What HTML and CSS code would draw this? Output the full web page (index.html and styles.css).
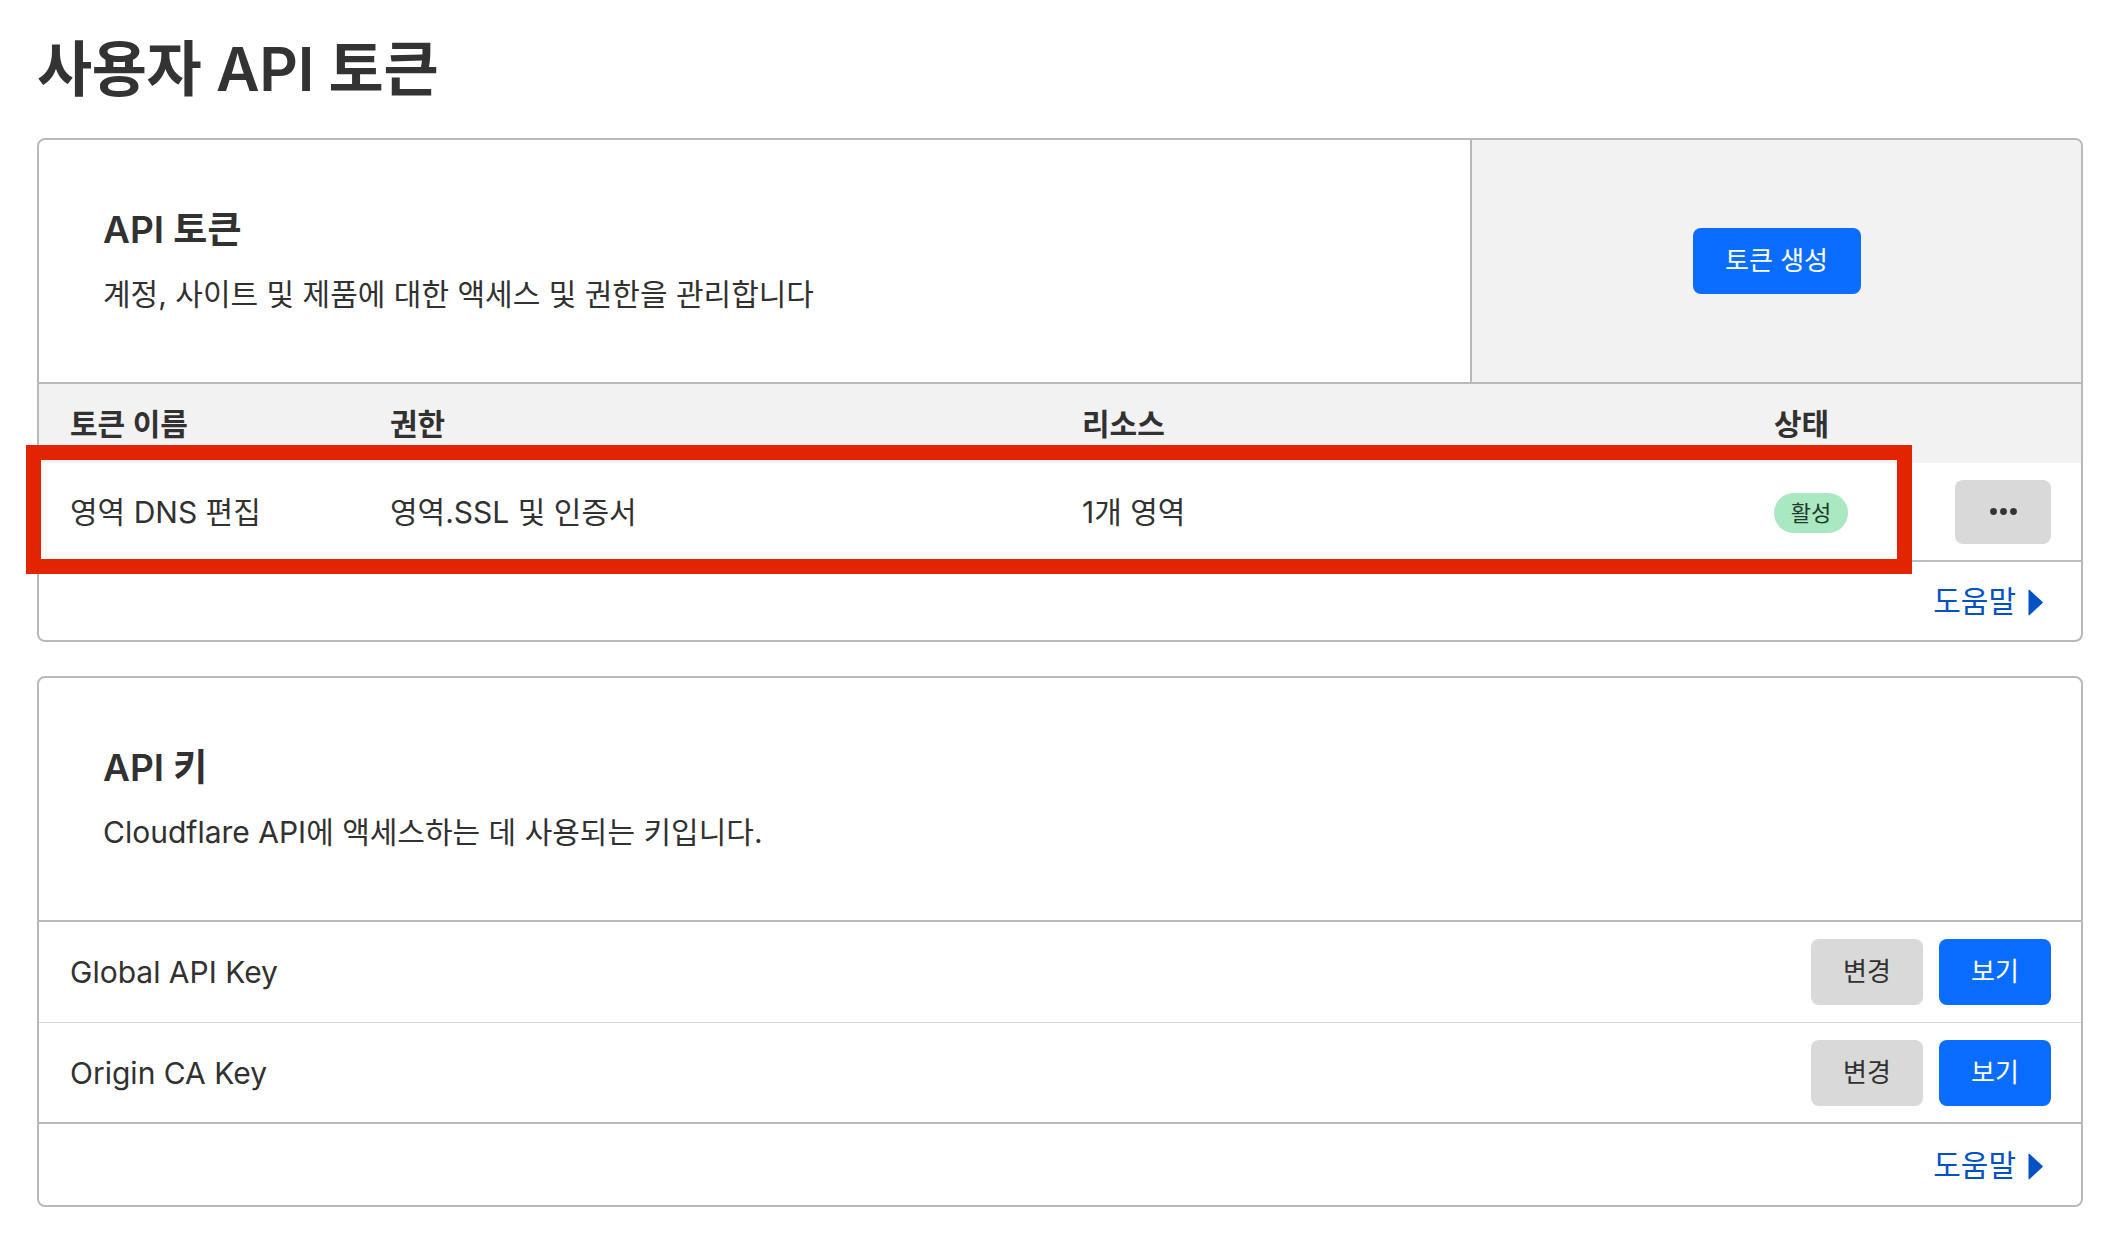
FILE: index.html
```html
<!DOCTYPE html>
<html lang="ko">
<head>
<meta charset="utf-8">
<title>사용자 API 토큰</title>
<link rel="stylesheet" href="styles.css">
</head>
<body>
<main class="page">
  <h1 class="page-title">사용자 API 토큰</h1>

  <section class="card">
    <div class="card-head split">
      <div class="intro">
        <h2 class="intro-title">API 토큰</h2>
        <p class="intro-text">계정, 사이트 및 제품에 대한 액세스 및 권한을 관리합니다</p>
      </div>
      <div class="aside">
        <button class="btn btn-primary btn-create" type="button">토큰 생성</button>
      </div>
    </div>

    <div class="token-table">
      <div class="trow thead">
        <div class="cell">토큰 이름</div>
        <div class="cell">권한</div>
        <div class="cell">리소스</div>
        <div class="cell">상태</div>
        <div class="cell"></div>
      </div>
      <div class="trow tbody">
        <div class="cell">영역 DNS 편집</div>
        <div class="cell">영역.SSL 및 인증서</div>
        <div class="cell">1개 영역</div>
        <div class="cell"><span class="badge">활성</span></div>
        <div class="cell">
          <button class="btn btn-gray btn-more" type="button" aria-label="더 보기">
            <svg width="27" height="7" viewBox="0 0 27 7"><circle cx="3.5" cy="3.5" r="3.4"/><circle cx="13.5" cy="3.5" r="3.4"/><circle cx="23.5" cy="3.5" r="3.4"/></svg>
          </button>
        </div>
        <div class="highlight"></div>
      </div>
    </div>

    <div class="card-foot">
      <a class="help" href="#">도움말<svg class="caret" width="15" height="27" viewBox="0 0 15 27"><path d="M0.5 1.2 Q0.5 0 1.4 0.8 L14.4 12.7 Q15 13.5 14.4 14.3 L1.4 26.2 Q0.5 27 0.5 25.8 Z"/></svg></a>
    </div>
  </section>

  <section class="card">
    <div class="card-head">
      <div class="intro">
        <h2 class="intro-title">API 키</h2>
        <p class="intro-text">Cloudflare API에 액세스하는 데 사용되는 키입니다.</p>
      </div>
    </div>

    <div class="key-row">
      <span class="key-name">Global API Key</span>
      <div class="actions">
        <button class="btn btn-gray btn-action" type="button">변경</button>
        <button class="btn btn-primary btn-action" type="button">보기</button>
      </div>
    </div>
    <div class="key-row last">
      <span class="key-name">Origin CA Key</span>
      <div class="actions">
        <button class="btn btn-gray btn-action" type="button">변경</button>
        <button class="btn btn-primary btn-action" type="button">보기</button>
      </div>
    </div>

    <div class="card-foot tall">
      <a class="help" href="#">도움말<svg class="caret" width="15" height="27" viewBox="0 0 15 27"><path d="M0.5 1.2 Q0.5 0 1.4 0.8 L14.4 12.7 Q15 13.5 14.4 14.3 L1.4 26.2 Q0.5 27 0.5 25.8 Z"/></svg></a>
    </div>
  </section>
</main>
</body>
</html>
```

FILE: styles.css
```css
* {
  box-sizing: border-box;
}

html, body {
  margin: 0;
  padding: 0;
  background: #ffffff;
}

body {
  font-family: Inter, "Noto Sans CJK KR", sans-serif;
  color: #313131;
  font-size: 30px;
  line-height: 40px;
}

.page {
  padding: 33px 37px 0 37px;
}

.page-title {
  margin: 0 0 33px 0;
  font-size: 60px;
  line-height: 72px;
  font-weight: 600;
  color: #333333;
  letter-spacing: -0.4px;
}

.card {
  border: 2px solid #b9b9b9;
  border-radius: 8px;
  background: #ffffff;
  margin-bottom: 34px;
}

.card-head {
  border-bottom: 2px solid #b9b9b9;
  min-height: 244px;
}

.card-head.split {
  display: grid;
  grid-template-columns: 1fr 611px;
}

.intro {
  padding: 67px 64px 68px 64px;
}

.intro-title {
  margin: 0 0 21px 0;
  font-size: 37px;
  line-height: 46px;
  font-weight: 600;
  color: #313131;
}

.intro-text {
  margin: 0;
  font-size: 30px;
  line-height: 40px;
}

.aside {
  background: #f2f2f2;
  border-left: 2px solid #b9b9b9;
  border-top-right-radius: 6px;
  display: flex;
  align-items: center;
  justify-content: center;
}

.btn {
  font-family: Inter, "Noto Sans CJK KR", sans-serif;
  border: none;
  border-radius: 8px;
  font-size: 26px;
  line-height: 34px;
  cursor: pointer;
  display: inline-flex;
  align-items: center;
  justify-content: center;
  padding: 0;
}

.btn-primary {
  background: #0a6dff;
  color: #ffffff;
}

.btn-gray {
  background: #d9d9d9;
  color: #313131;
}

.btn-create {
  width: 168px;
  height: 66px;
}

.trow {
  display: grid;
  grid-template-columns: 320px 692px 692px 1fr 96px;
  align-items: center;
  padding: 0 30px 0 31px;
}

.thead {
  background: #f2f2f2;
  height: 79px;
  font-weight: 600;
}

.tbody {
  position: relative;
  height: 99px;
  border-bottom: 2px solid #bdbdbd;
}

.badge {
  display: inline-flex;
  align-items: center;
  justify-content: center;
  width: 74px;
  height: 40px;
  border-radius: 20px;
  background: #aae8c2;
  color: #1f3a2a;
  font-size: 22px;
  line-height: 28px;
}

.btn-more {
  width: 96px;
  height: 64px;
}

.btn-more svg {
  fill: #333333;
}

.highlight {
  position: absolute;
  left: -13px;
  top: -18px;
  width: 1886px;
  height: 129px;
  border: 15px solid #e22400;
  pointer-events: none;
}

.card-foot {
  height: 78px;
  display: flex;
  align-items: center;
  justify-content: flex-end;
  padding-right: 38px;
}

.card-foot.tall {
  height: 81px;
}

.help {
  color: #0051c3;
  text-decoration: none;
  display: inline-flex;
  align-items: center;
  gap: 12px;
  font-size: 30px;
  line-height: 40px;
}

.caret {
  fill: #0051c3;
  margin-top: 3px;
}

.key-row {
  display: flex;
  align-items: center;
  justify-content: space-between;
  height: 101px;
  padding: 0 30px 0 31px;
  border-bottom: 1px solid #d9d9d9;
}

.key-row.last {
  height: 101px;
  border-bottom: 2px solid #b9b9b9;
}

.key-name {
  font-size: 30px;
  line-height: 40px;
}

.actions {
  display: flex;
  gap: 16px;
}

.btn-action {
  width: 112px;
  height: 66px;
}
```
